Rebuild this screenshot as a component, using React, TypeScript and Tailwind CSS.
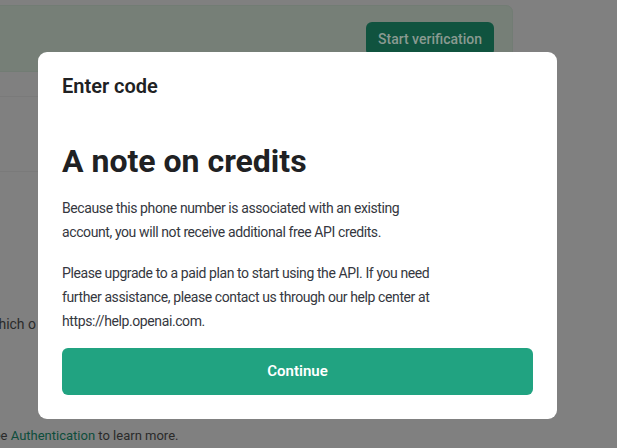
import React from "react";

export default function App() {
  return (
    <div
      className="relative w-[617px] h-[448px] overflow-hidden bg-[#808080]"
      style={{ fontFamily: "Roboto, 'Liberation Sans', sans-serif" }}
    >
      {/* background page (dimmed) */}
      <div className="flex flex-col w-[533px] ml-[-20px] pt-[5px]">
        <div className="h-[67px] rounded-[7px] border border-[#727c74] bg-[#767f77] flex items-start justify-end pt-[16px] pr-[18px]">
          <div className="h-[34px] px-[12px] rounded-[6px] bg-[#10533f] text-[#8a9a91] text-[14px] font-medium flex items-center">
            Start verification
          </div>
        </div>
        <div className="h-[24px]" />
        <div className="h-px bg-[#7a7a7a]" />
        <div className="h-[74px]" />
        <div className="h-px bg-[#7a7a7a]" />
        <div className="h-[140px]" />
        <div className="text-[14px] text-[#2a2a2a] leading-[24px]">
          <span className="ml-[6px]">Which o</span>
        </div>
        <div className="h-[90px]" />
        <div className="text-[13px] text-[#2a2a2a] leading-[20px]">
          <span className="ml-[6px]">See </span>
          <span className="text-[#0d4d3b]">Authentication</span> to learn more.
        </div>
      </div>

      {/* modal */}
      <div className="absolute left-[38px] top-[52px] w-[519px] h-[367px] bg-white rounded-[9px] px-[24px] pt-[20px] pb-[24px] flex flex-col">
        <div className="text-[20px] leading-[28px] font-semibold text-[#202123]">
          Enter code
        </div>
        <div className="mt-[41px] text-[32px] leading-[40px] font-bold text-[#202123]">
          A note on credits
        </div>
        <p className="mt-[15px] text-[14px] leading-[24px] text-[#353740] tracking-[-0.4px]">
          Because this phone number is associated with an existing
          <br />
          account, you will not receive additional free API credits.
        </p>
        <p className="mt-[17px] text-[14px] leading-[24px] text-[#353740] tracking-[-0.4px]">
          Please upgrade to a paid plan to start using the API. If you need
          <br />
          further assistance, please contact us through our help center at
          <br />
          https://help.openai.com.
        </p>
        <button className="mt-[15px] h-[47px] w-full rounded-[6px] bg-[#21a381] text-white text-[15px] font-semibold">
          Continue
        </button>
      </div>
    </div>
  );
}
